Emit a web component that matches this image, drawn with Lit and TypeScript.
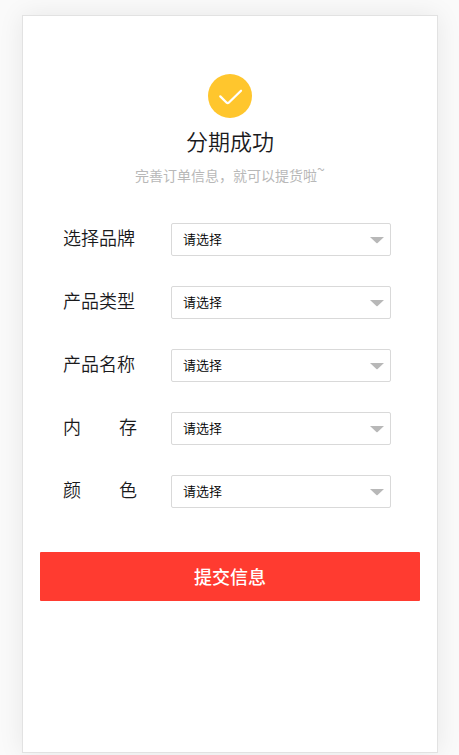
import { LitElement, html, css } from "lit";
import { customElement } from "lit/decorators.js";

interface Field {
  id: string;
  label: string;
}

const FIELDS: Field[] = [
  { id: "brand", label: "选择品牌" },
  { id: "type", label: "产品类型" },
  { id: "name", label: "产品名称" },
  { id: "memory", label: "内存" },
  { id: "color", label: "颜色" },
];

@customElement("app-root")
export class AppRoot extends LitElement {
  static styles = css`
    :host {
      display: flex;
      box-sizing: border-box;
      min-height: 100vh;
      padding: 15px 21px 2px 22px;
      background: #fafafa;
      font-family: "Noto Sans CJK SC", sans-serif;
      font-weight: 350;
      color: #1a1a1c;
    }
    * {
      box-sizing: border-box;
    }
    .card {
      flex: 1;
      min-width: 0;
      padding: 58px 17px 40px;
      background: #fff;
      border: 1px solid #e2e2e2;
      box-shadow: 0 0 24px rgba(0, 0, 0, 0.08);
    }
    .head {
      display: flex;
      flex-direction: column;
      align-items: center;
      text-align: center;
    }
    .mark {
      display: block;
      width: 44px;
      height: 44px;
    }
    h1 {
      margin: 8px 0 0;
      font-size: 22px;
      line-height: 28px;
      font-weight: 350;
    }
    .hint {
      margin: 11px 0 0;
      font-size: 14px;
      line-height: 20px;
      font-weight: 400;
      color: #b8b8b8;
    }
    .tail {
      line-height: 0;
      vertical-align: super;
    }
    .fields {
      display: flex;
      flex-direction: column;
      gap: 30px;
      margin: 38px 29px 0 23px;
    }
    .row {
      display: flex;
      align-items: flex-start;
    }
    .label {
      flex: none;
      width: 74px;
      margin-right: 34px;
      font-size: 18px;
      line-height: 28px;
      white-space: nowrap;
    }
    .label.short {
      display: flex;
      justify-content: space-between;
    }
    .box {
      position: relative;
      flex: 1;
      min-width: 0;
    }
    select {
      display: block;
      width: 100%;
      height: 33px;
      margin: 0;
      padding: 0 30px 2px 11px;
      appearance: none;
      background: #fff;
      border: 1px solid #d9d9d9;
      border-radius: 2px;
      font-family: inherit;
      font-size: 13px;
      font-weight: 350;
      color: #000;
    }
    .arrow {
      position: absolute;
      right: 7px;
      top: 14px;
      display: block;
      width: 14px;
      height: 7px;
      pointer-events: none;
    }
    .submit {
      display: block;
      width: 100%;
      height: 49px;
      margin: 44px 0 0;
      padding: 0 0 2px;
      border: 0;
      border-radius: 1px;
      background: #ff3b30;
      color: #fff;
      font-family: inherit;
      font-size: 18px;
      font-weight: 500;
    }
  `;

  private renderField(field: Field) {
    const short = field.label.length === 2;
    return html`
      <div class="row">
        <label class=${short ? "label short" : "label"} for=${field.id}
          >${short
            ? [...field.label].map((ch) => html`<span>${ch}</span>`)
            : field.label}</label
        >
        <div class="box">
          <select id=${field.id} name=${field.id}>
            <option value="">请选择</option>
          </select>
          <svg class="arrow" viewBox="0 0 14 7" aria-hidden="true">
            <path d="M0 0H14L7.6 6Q7 6.5 6.4 6Z" fill="#b8b8b8" />
          </svg>
        </div>
      </div>
    `;
  }

  render() {
    return html`
      <main class="card">
        <header class="head">
          <svg class="mark" viewBox="0 0 44 44" aria-hidden="true">
            <circle cx="22" cy="22" r="22" fill="#ffc62d" />
            <path
              d="M12.3 22.4L18.7 28.7Q19.7 29.6 20.7 28.7L33 16.7"
              fill="none"
              stroke="#fff"
              stroke-width="2.3"
              stroke-linecap="round"
            />
          </svg>
          <h1>分期成功</h1>
          <p class="hint">完善订单信息，就可以提货啦<span class="tail">~</span></p>
        </header>
        <form @submit=${(e: Event) => e.preventDefault()}>
          <div class="fields">${FIELDS.map((f) => this.renderField(f))}</div>
          <button class="submit" type="submit">提交信息</button>
        </form>
      </main>
    `;
  }
}
